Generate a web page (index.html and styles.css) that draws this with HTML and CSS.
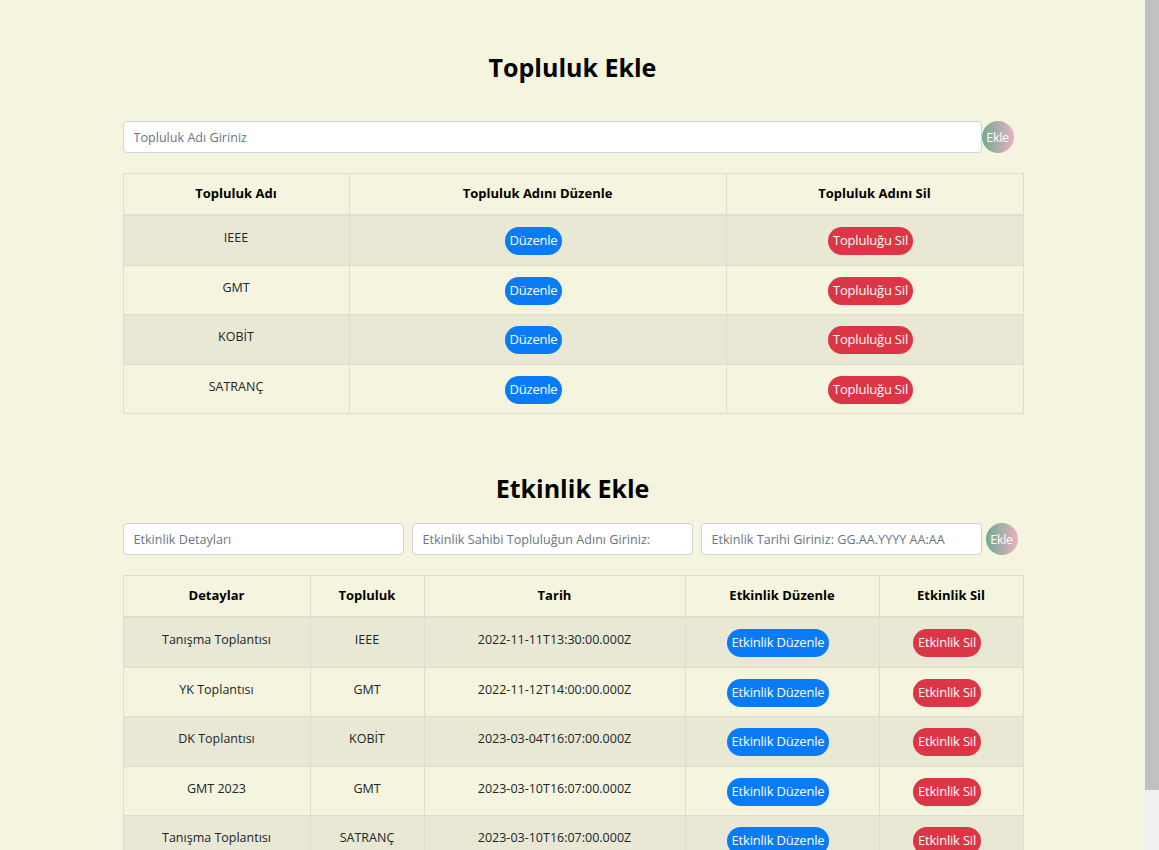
FILE: index.html
```html
<!DOCTYPE html>
<html lang="tr">
<head>
<meta charset="utf-8">
<title>Topluluk Yönetimi</title>
<link rel="stylesheet" href="styles.css">
</head>
<body>
<main class="container">
  <section class="section">
    <h1 class="title">Topluluk Ekle</h1>
    <div class="form-row">
      <input class="field field-wide" type="text" placeholder="Topluluk Adı Giriniz">
      <button class="add-btn">Ekle</button>
    </div>
    <table class="table">
      <colgroup>
        <col class="c-226"><col class="c-377"><col class="c-297">
      </colgroup>
      <thead>
        <tr><th>Topluluk Adı</th><th>Topluluk Adını Düzenle</th><th>Topluluk Adını Sil</th></tr>
      </thead>
      <tbody>
        <tr><td>IEEE</td><td><button class="pill blue">Düzenle</button></td><td><button class="pill red">Topluluğu Sil</button></td></tr>
        <tr><td>GMT</td><td><button class="pill blue">Düzenle</button></td><td><button class="pill red">Topluluğu Sil</button></td></tr>
        <tr><td>KOBİT</td><td><button class="pill blue">Düzenle</button></td><td><button class="pill red">Topluluğu Sil</button></td></tr>
        <tr><td>SATRANÇ</td><td><button class="pill blue">Düzenle</button></td><td><button class="pill red">Topluluğu Sil</button></td></tr>
      </tbody>
    </table>
  </section>

  <section class="section section-2">
    <h1 class="title">Etkinlik Ekle</h1>
    <div class="form-row form-row-3">
      <input class="field field-third" type="text" placeholder="Etkinlik Detayları">
      <input class="field field-third" type="text" placeholder="Etkinlik Sahibi Topluluğun Adını Giriniz:">
      <input class="field field-third" type="text" placeholder="Etkinlik Tarihi Giriniz: GG.AA.YYYY AA:AA">
      <button class="add-btn add-btn-gap">Ekle</button>
    </div>
    <table class="table">
      <colgroup>
        <col class="c-187"><col class="c-114"><col class="c-261"><col class="c-194"><col class="c-144">
      </colgroup>
      <thead>
        <tr><th>Detaylar</th><th>Topluluk</th><th>Tarih</th><th>Etkinlik Düzenle</th><th>Etkinlik Sil</th></tr>
      </thead>
      <tbody>
        <tr><td>Tanışma Toplantısı</td><td>IEEE</td><td>2022-11-11T13:30:00.000Z</td><td><button class="pill blue">Etkinlik Düzenle</button></td><td><button class="pill red">Etkinlik Sil</button></td></tr>
        <tr><td>YK Toplantısı</td><td>GMT</td><td>2022-11-12T14:00:00.000Z</td><td><button class="pill blue">Etkinlik Düzenle</button></td><td><button class="pill red">Etkinlik Sil</button></td></tr>
        <tr><td>DK Toplantısı</td><td>KOBİT</td><td>2023-03-04T16:07:00.000Z</td><td><button class="pill blue">Etkinlik Düzenle</button></td><td><button class="pill red">Etkinlik Sil</button></td></tr>
        <tr><td>GMT 2023</td><td>GMT</td><td>2023-03-10T16:07:00.000Z</td><td><button class="pill blue">Etkinlik Düzenle</button></td><td><button class="pill red">Etkinlik Sil</button></td></tr>
        <tr><td>Tanışma Toplantısı</td><td>SATRANÇ</td><td>2023-03-10T16:07:00.000Z</td><td><button class="pill blue">Etkinlik Düzenle</button></td><td><button class="pill red">Etkinlik Sil</button></td></tr>
      </tbody>
    </table>
  </section>
</main>
</body>
</html>
```

FILE: styles.css
```css
* { box-sizing: border-box; }

html {
  margin: 0;
  background:
    linear-gradient(#c1c1c1, #c1c1c1) right top / 14px 790px no-repeat,
    linear-gradient(#f1f1f1, #f1f1f1) right top / 14px 100% no-repeat,
    #f5f4de;
}

body {
  margin: 0;
  padding: 0 14px 34px 0;
  font-family: "Open Sans", "Noto Sans", "Liberation Sans", sans-serif;
  font-size: 14px;
  line-height: 21px;
  color: #212529;
}

.container {
  width: 900px;
  margin: 0 auto;
}

.section {
  padding-top: 50px;
  display: flex;
  flex-direction: column;
}

.section-2 {
  padding-top: 57px;
}

.title {
  margin: 0;
  text-align: center;
  font-size: 25px;
  line-height: 34px;
  font-weight: 700;
  color: #000;
}

.form-row {
  display: flex;
  align-items: center;
  margin-top: 37px;
  margin-bottom: 20px;
}

.form-row-3 {
  margin-top: 18px;
  gap: 8px;
}

.field {
  height: 32px;
  padding: 4px 10px;
  border: 1px solid #ced4da;
  border-radius: 4px;
  background: #fff;
  font-family: inherit;
  font-size: 12.6px;
  color: #495057;
  outline: none;
}

.field::placeholder { color: #6c757d; }

.field-wide { width: 859px; }

.field-third { width: 281px; }

.add-btn {
  width: 32px;
  height: 32px;
  padding: 0;
  border: none;
  border-radius: 50%;
  background: linear-gradient(to right, #6fab93, #eab0c1);
  color: #fff;
  font-family: inherit;
  font-size: 12.5px;
  letter-spacing: -0.3px;
  cursor: pointer;
}

.add-btn-gap { margin-left: -4px; }

.table {
  width: 900px;
  border-collapse: collapse;
  table-layout: fixed;
}

.c-226 { width: 226px; }
.c-377 { width: 377px; }
.c-297 { width: 297px; }
.c-187 { width: 187px; }
.c-114 { width: 114px; }
.c-261 { width: 261px; }
.c-194 { width: 194px; }
.c-144 { width: 144px; }

.table th,
.table td {
  border: 1px solid #dfddd0;
  text-align: center;
  vertical-align: top;
}

.table th {
  padding: 9px 8px 10px;
  font-size: 13px;
  font-weight: 700;
  color: #000;
  border-bottom: 2px solid #dfddd0;
}

.table td {
  padding: 11px 8px 9.5px;
  font-size: 12.5px;
}

.table tbody tr:nth-child(odd) { background: #e9e8d4; }

.pill {
  display: inline-block;
  vertical-align: middle;
  margin: 0 8px 0 0;
  padding: 3px 5px 4px;
  border: none;
  border-radius: 16px;
  color: #fff;
  font-family: inherit;
  font-size: 13px;
  line-height: 21px;
  letter-spacing: -0.2px;
  cursor: pointer;
}

.blue { background: #0a7bf7; }
.red { background: #dc3545; }
```
